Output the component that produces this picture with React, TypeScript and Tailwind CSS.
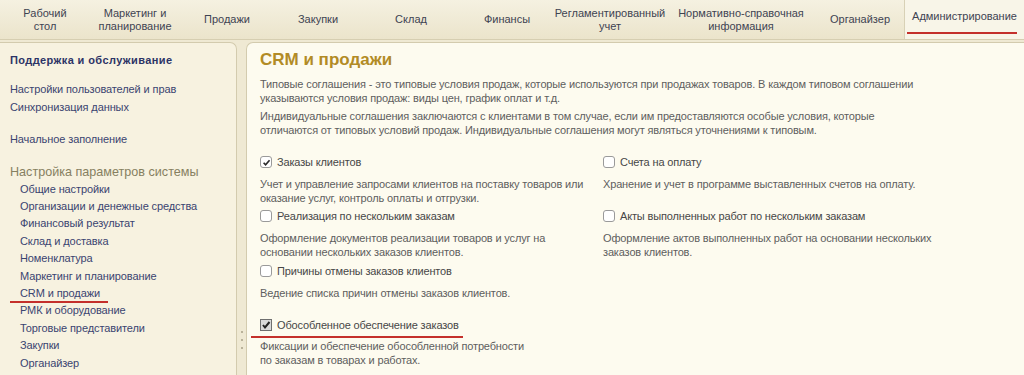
import React from "react";

const tabs: { label: React.ReactNode; w: string; active?: boolean }[] = [
  { label: <>Рабочий<br />стол</>, w: "w-[90px]" },
  { label: <>Маркетинг и<br />планирование</>, w: "w-[90px]" },
  { label: "Продажи", w: "w-[94px]" },
  { label: "Закупки", w: "w-[88px]" },
  { label: "Склад", w: "w-[98px]" },
  { label: "Финансы", w: "w-[94px]" },
  { label: <>Регламентированный<br />учет</>, w: "w-[112px]" },
  { label: <>Нормативно-справочная<br />информация</>, w: "w-[150px]" },
  { label: "Органайзер", w: "w-[88px]" },
  { label: "Администрирование", w: "w-[120px]", active: true },
];

const leftItems = [
  "Общие настройки",
  "Организации и денежные средства",
  "Финансовый результат",
  "Склад и доставка",
  "Номенклатура",
  "Маркетинг и планирование",
  "CRM и продажи",
  "РМК и оборудование",
  "Торговые представители",
  "Закупки",
  "Органайзер",
];

function Check({ checked, old }: { checked?: boolean; old?: boolean }) {
  if (old) {
    return (
      <span className="w-[12px] h-[12px] shrink-0 border border-[#6f6f6f] bg-[#d9d9d9] flex items-center justify-center">
        <svg width="10" height="10" viewBox="0 0 10 10">
          <path d="M2 5 L4 7.5 L8.5 2" stroke="#222" strokeWidth="2" fill="none" />
        </svg>
      </span>
    );
  }
  return (
    <span className="w-[12px] h-[12px] shrink-0 rounded-[3px] border border-[#9a9a9a] bg-white flex items-center justify-center">
      {checked && (
        <svg width="9" height="9" viewBox="0 0 10 10">
          <path d="M1.8 5.2 L4 7.6 L8.4 2.4" stroke="#2a2a2a" strokeWidth="1.8" fill="none" />
        </svg>
      )}
    </span>
  );
}

function CheckRow({ label, checked, old }: { label: string; checked?: boolean; old?: boolean }) {
  return (
    <div className="flex items-center gap-[5px] h-[16px] text-[#474747] whitespace-nowrap">
      <Check checked={checked} old={old} />
      <span>{label}</span>
    </div>
  );
}

function Desc({ children }: { children: React.ReactNode }) {
  return <div className="text-[#5e5e5e] leading-[14px] whitespace-nowrap">{children}</div>;
}

export default function App() {
  return (
    <div
      className="relative w-[1024px] h-[375px] overflow-hidden bg-[#efe9d3] text-[11px]"
      style={{ fontFamily: '"Liberation Sans", Arial, sans-serif' }}
    >
      {/* top tab bar */}
      <div className="h-[40px] flex border-b border-[#d6ceb1] bg-gradient-to-b from-[#f5f1e1] to-[#ebe4cb]">
        {tabs.map((t, i) => (
          <div
            key={i}
            className={
              t.w +
              " flex items-center justify-center text-center leading-[13px] text-[#3e4352] " +
              (t.active ? "bg-[#f8f5e8] border-l border-[#d8d1b6]" : "")
            }
          >
            <span className={t.active ? "mt-[-6px]" : ""}>{t.label}</span>
          </div>
        ))}
      </div>

      <div className="flex h-[335px] pt-[2px]">
        {/* left panel */}
        <div className="w-[237px] h-full shrink-0 rounded-tr-[7px] border-t border-r border-[#d3cbae] bg-[#f7f2e0] pl-[10px] pt-[8px]">
          <div className="font-bold text-[#2c3466] leading-[18px] tracking-[0.4px]">Поддержка и обслуживание</div>
          <div className="mt-[12px] text-[#3a4470] leading-[17.5px] tracking-[-0.1px]">
            <div>Настройки пользователей и прав</div>
            <div>Синхронизация данных</div>
          </div>
          <div className="mt-[15px] text-[#3a4470] leading-[17.5px] tracking-[-0.1px]">Начальное заполнение</div>
          <div className="mt-[14px] text-[12.6px] text-[#868060] leading-[18px]">Настройка параметров системы</div>
          <div className="pl-[10px] text-[#3a4470] leading-[17.4px] tracking-[-0.1px]">
            {leftItems.map((s) => (
              <div key={s}>{s}</div>
            ))}
          </div>
        </div>

        {/* splitter */}
        <div className="w-[9px] shrink-0 flex flex-col items-center justify-end pb-[26px] gap-[6px]">
          <span className="w-[2px] h-[2px] bg-[#b9b29a]" />
          <span className="w-[2px] h-[2px] bg-[#b9b29a]" />
          <span className="w-[2px] h-[2px] bg-[#b9b29a]" />
        </div>

        {/* main panel */}
        <div className="flex-1 h-full rounded-tl-[7px] border-t border-l border-[#d3cbae] bg-[#fdfbef] pl-[13px] pt-[6px] tracking-[-0.15px]">
          <div className="text-[17px] font-bold text-[#b28b26] leading-[22px] tracking-normal">CRM и продажи</div>
          <div className="mt-[6px] text-[#5e5e5e] leading-[14px]">
            Типовые соглашения - это типовые условия продаж, которые используются при продажах товаров. В каждом типовом соглашении
            <br />
            указываются условия продаж: виды цен, график оплат и т.д.
          </div>
          <div className="mt-[4px] text-[#5e5e5e] leading-[14px]">
            Индивидуальные соглашения заключаются с клиентами в том случае, если им предоставляются особые условия, которые
            <br />
            отличаются от типовых условий продаж. Индивидуальные соглашения могут являться уточнениями к типовым.
          </div>

          <div className="mt-[17px] grid grid-cols-[343px_1fr]">
            <CheckRow label="Заказы клиентов" checked />
            <CheckRow label="Счета на оплату" />
            <div className="mt-[7px]">
              <Desc>
                Учет и управление запросами клиентов на поставку товаров или
                <br />
                оказание услуг, контроль оплаты и отгрузки.
              </Desc>
            </div>
            <div className="mt-[7px]">
              <Desc>Хранение и учет в программе выставленных счетов на оплату.</Desc>
            </div>
            <div className="mt-[3px]">
              <CheckRow label="Реализация по нескольким заказам" />
            </div>
            <div className="mt-[3px]">
              <CheckRow label="Акты выполненных работ по нескольким заказам" />
            </div>
            <div className="mt-[7px]">
              <Desc>
                Оформление документов реализации товаров и услуг на
                <br />
                основании нескольких заказов клиентов.
              </Desc>
            </div>
            <div className="mt-[7px]">
              <Desc>
                Оформление актов выполненных работ на основании нескольких
                <br />
                заказов клиентов.
              </Desc>
            </div>
          </div>

          <div className="mt-[4px]">
            <CheckRow label="Причины отмены заказов клиентов" />
          </div>
          <div className="mt-[7px]">
            <Desc>Ведение списка причин отмены заказов клиентов.</Desc>
          </div>
          <div className="mt-[17px]">
            <CheckRow label="Обособленное обеспечение заказов" old />
          </div>
          <div className="mt-[6px]">
            <Desc>
              Фиксации и обеспечение обособленной потребности
              <br />
              по заказам в товарах и работах.
            </Desc>
          </div>
        </div>
      </div>

      {/* red annotation underlines */}
      <div className="absolute left-[907px] top-[32px] w-[110px] h-[2px] bg-[#c4302b]" />
      <div className="absolute left-[10px] top-[301px] w-[98px] h-[2px] bg-[#c4302b]" />
      <div className="absolute left-[251px] top-[336px] w-[212px] h-[2px] bg-[#c4302b]" />
    </div>
  );
}
